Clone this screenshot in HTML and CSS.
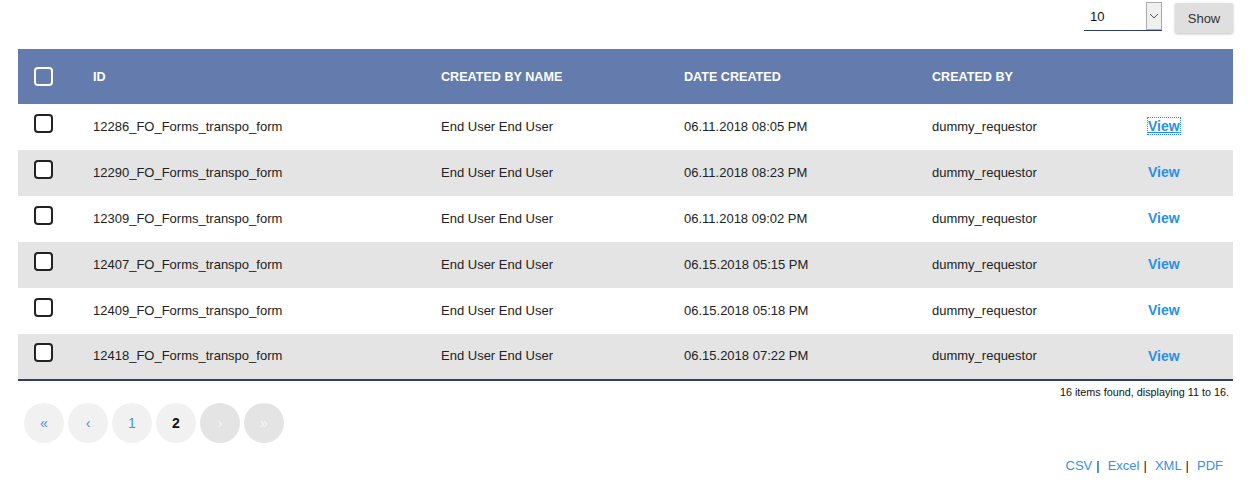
FILE: index.html
```html
<!DOCTYPE html>
<html>
<head>
<meta charset="utf-8">
<link rel="stylesheet" href="styles.css">
</head>
<body>
<div class="page">
  <div class="toolbar">
    <div class="select">
      <span class="select-value">10</span>
      <span class="select-arrow"><svg width="10" height="6" viewBox="0 0 10 6"><path d="M1 1l4 4 4-4" fill="none" stroke="#555" stroke-width="1"/></svg></span>
    </div>
    <button class="show-btn">Show</button>
  </div>
  <table class="grid">
    <thead>
      <tr>
        <th class="c-check"><span class="cb cb-head"></span></th>
        <th class="c-id">ID</th>
        <th class="c-name">CREATED BY NAME</th>
        <th class="c-date">DATE CREATED</th>
        <th class="c-by">CREATED BY</th>
        <th class="c-view"></th>
      </tr>
    </thead>
    <tbody>
      <tr><td class="c-check"><span class="cb"></span></td><td>12286_FO_Forms_transpo_form</td><td>End User End User</td><td>06.11.2018 08:05 PM</td><td>dummy_requestor</td><td class="c-view"><a class="view focus">View</a></td></tr>
      <tr class="alt"><td class="c-check"><span class="cb"></span></td><td>12290_FO_Forms_transpo_form</td><td>End User End User</td><td>06.11.2018 08:23 PM</td><td>dummy_requestor</td><td class="c-view"><a class="view">View</a></td></tr>
      <tr><td class="c-check"><span class="cb"></span></td><td>12309_FO_Forms_transpo_form</td><td>End User End User</td><td>06.11.2018 09:02 PM</td><td>dummy_requestor</td><td class="c-view"><a class="view">View</a></td></tr>
      <tr class="alt"><td class="c-check"><span class="cb"></span></td><td>12407_FO_Forms_transpo_form</td><td>End User End User</td><td>06.15.2018 05:15 PM</td><td>dummy_requestor</td><td class="c-view"><a class="view">View</a></td></tr>
      <tr><td class="c-check"><span class="cb"></span></td><td>12409_FO_Forms_transpo_form</td><td>End User End User</td><td>06.15.2018 05:18 PM</td><td>dummy_requestor</td><td class="c-view"><a class="view">View</a></td></tr>
      <tr class="alt"><td class="c-check"><span class="cb"></span></td><td>12418_FO_Forms_transpo_form</td><td>End User End User</td><td>06.15.2018 07:22 PM</td><td>dummy_requestor</td><td class="c-view"><a class="view">View</a></td></tr>
    </tbody>
  </table>
  <div class="summary">16 items found, displaying 11 to 16.</div>
  <div class="pager">
    <span class="pg link">&laquo;</span>
    <span class="pg link">&lsaquo;</span>
    <span class="pg link num">1</span>
    <span class="pg current">2</span>
    <span class="pg disabled">&rsaquo;</span>
    <span class="pg disabled">&raquo;</span>
  </div>
  <div class="exports">
    <a>CSV</a><span class="sep">|</span>
    <a>Excel</a><span class="sep">|</span>
    <a>XML</a><span class="sep">|</span>
    <a>PDF</a>
  </div>
</div>
</body>
</html>
```
FILE: styles.css
```css
html, body {
  margin: 0;
  padding: 0;
  background: #fff;
}
body {
  font-family: "Liberation Sans", Arial, sans-serif;
  font-size: 13px;
  color: #222;
}
.page {
  padding: 0 25px 0 18px;
}
.toolbar {
  display: flex;
  justify-content: flex-end;
  align-items: flex-start;
  height: 49px;
  gap: 13px;
}
.select {
  margin-top: 2px;
  width: 78px;
  height: 29px;
  box-sizing: border-box;
  border-bottom: 1px solid #2e3f6e;
  display: flex;
  align-items: flex-start;
  justify-content: space-between;
}
.select-value {
  padding: 7px 0 0 6px;
  font-size: 13px;
  color: #111;
}
.select-arrow {
  width: 16px;
  height: 28px;
  box-sizing: border-box;
  border: 1px solid #a9a9a9;
  background: #f0f0f0;
  display: flex;
  align-items: center;
  justify-content: center;
}
.show-btn {
  margin-top: 3px;
  width: 58px;
  height: 30px;
  border: none;
  border-radius: 2px;
  background: #dfdfdf;
  box-shadow: 0 1px 3px rgba(0,0,0,0.25);
  font-family: "Liberation Sans", Arial, sans-serif;
  font-size: 13px;
  color: #333;
  padding: 0;
}
.grid {
  width: 100%;
  border-collapse: collapse;
  border-bottom: 2px solid #2e3f6e;
}
.grid th {
  background: #637bad;
  color: #fff;
  font-weight: bold;
  font-size: 12.6px;
  text-align: left;
  height: 55px;
  padding: 0;
  vertical-align: middle;
}
.grid td {
  height: 46px;
  padding: 0 0 2px 0;
  box-sizing: border-box;
  vertical-align: middle;
  color: #222;
}
.grid tr.alt td {
  background: #e4e4e4;
}
.c-check {
  width: 75px;
}
.c-check .cb {
  display: block;
  margin-left: 16px;
  margin-top: -6px;
}
.grid th.c-check .cb {
  margin-top: 0;
}
.c-id { width: 348px; }
.c-name { width: 243px; }
.c-date { width: 248px; }
.c-by { width: 216px; }
.cb {
  width: 15px;
  height: 15px;
  border: 2px solid #222;
  border-radius: 4px;
  background: #fff;
}
.cb-head {
  border-color: #fff;
  background: transparent;
}
.view {
  color: #2c8fe6;
  font-weight: bold;
  font-size: 14px;
  text-decoration: none;
}
.view.focus {
  outline: 1px dotted #2c8fe6;
  text-decoration: underline;
}
.summary {
  text-align: right;
  font-size: 10.8px;
  color: #111;
  padding: 5px 4px 0 0;
  height: 17px;
}
.pager {
  display: flex;
  gap: 4px;
  padding-left: 6px;
}
.pg {
  width: 40px;
  height: 40px;
  border-radius: 50%;
  background: #f1f1f1;
  display: flex;
  align-items: center;
  justify-content: center;
  font-size: 14px;
}
.pg.link {
  color: #4a90e6;
}
.pg.current {
  color: #111;
  font-weight: bold;
}
.pg.disabled {
  background: #e4e4e4;
  color: #f5f5f5;
}
.exports {
  display: flex;
  justify-content: flex-end;
  margin-top: 15px;
  padding-right: 10px;
  font-size: 13px;
}
.exports a {
  color: #3a8fe6;
}
.exports .sep {
  color: #222;
  margin: 0 8px 0 4px;
}
```
